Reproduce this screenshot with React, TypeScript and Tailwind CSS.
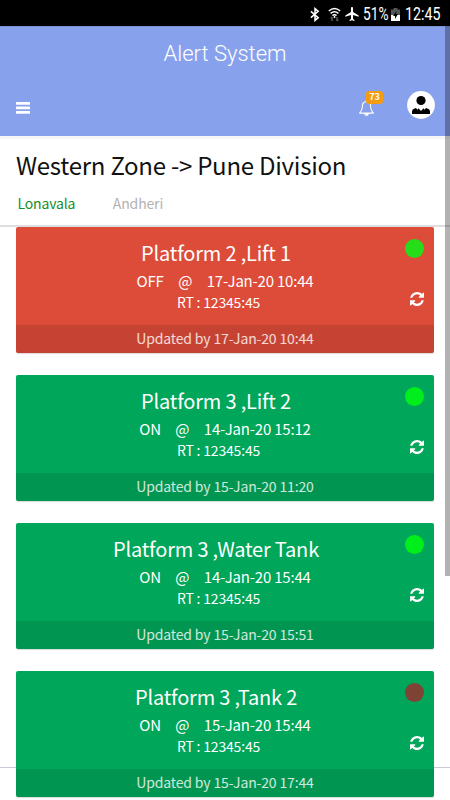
type Alert = {
  name: string;
  state: "ON" | "OFF";
  since: string;
  runtime: string;
  updated: string;
  dot: string;
};

const ALERTS: Alert[] = [
  { name: "Platform 2 ,Lift 1", state: "OFF", since: "17-Jan-20 10:44", runtime: "12345:45", updated: "17-Jan-20 10:44", dot: "bg-[#27dc18]" },
  { name: "Platform 3 ,Lift 2", state: "ON", since: "14-Jan-20 15:12", runtime: "12345:45", updated: "15-Jan-20 11:20", dot: "bg-[#00ee1c]" },
  { name: "Platform 3 ,Water Tank", state: "ON", since: "14-Jan-20 15:44", runtime: "12345:45", updated: "15-Jan-20 15:51", dot: "bg-[#00ee1c]" },
  { name: "Platform 3 ,Tank 2", state: "ON", since: "15-Jan-20 15:44", runtime: "12345:45", updated: "15-Jan-20 17:44", dot: "bg-[#7e4335]" },
];

function RefreshIcon() {
  return (
    <svg width="14" height="14" viewBox="0 0 1536 1536" fill="currentColor">
      <path d="M1511 928q0 5-1 7-64 268-268 434.5T764 1536q-146 0-282.5-55T238 1324l-129 129q-19 19-45 19t-45-19-19-45V960q0-26 19-45t45-19h448q26 0 45 19t19 45-19 45l-137 137q71 66 161 102t187 36q134 0 250-65t186-179q11-17 53-117 8-23 30-23h192q13 0 22.500 9.500t9.500 22.500zm25-800v448q0 26-19 45t-45 19h-448q-26 0-45-19t-19-45 19-45l138-138Q969 256 768 256q-134 0-250 65T332 500q-11 17-53 117-8 23-30 23H50q-13 0-22.500-9.500T18 608v-7q65-268 270-434.500T768 0q146 0 284 55.500T1297 212l130-129q19-19 45-19t45 19 19 45z" />
    </svg>
  );
}

function MenuIcon() {
  return (
    <svg width="14" height="12" viewBox="0 0 14 12" fill="currentColor">
      <rect y="0" width="14" height="2.700" rx="0.500" />
      <rect y="4.500" width="14" height="2.700" rx="0.500" />
      <rect y="9" width="14" height="2.700" rx="0.500" />
    </svg>
  );
}

function BellIcon() {
  return (
    <svg width="15" height="16" viewBox="0 0 1664 1792" fill="currentColor">
      <path transform="translate(-64 0)" d="M912 1696q0-16-16-16-59 0-101.500-42.500T752 1536q0-16-16-16t-16 16q0 73 51.500 124.500T896 1712q16 0 16-16zM246 1408h1300q-266-300-266-832 0-51-24-105t-69-103-121.500-80.500T896 256t-169.500 31.500T605 368t-69 103-24 105q0 532-266 832zm1482 0q0 52-38 90t-90 38h-448q0 106-75 181t-181 75-181-75-75-181H192q-52 0-90-38t-38-90q50-42 91-88t85-119.500 74.500-158.500 50-206T384 576q0-152 117-282.500T808 135q-8-19-8-39 0-40 28-68t68-28 68 28 28 68q0 20-8 39 190 28 307 158.500T1408 576q0 139 19.500 260t50 206 74.500 158.500 85 119.500 91 88z" />
    </svg>
  );
}

function Avatar() {
  return (
    <svg width="28" height="28" viewBox="0 0 28 28">
      <circle cx="14" cy="14" r="13.900" fill="#fff" />
      <circle cx="14" cy="9.500" r="4.600" fill="#000" />
      <path d="M5 23v-2.500q0-2 2-2.800l2-.7 1.500 1.800 1-1.500L14 20l2.500-2.700 1 1.500L19 17l2 .7q2 .8 2 2.800V23z" fill="#000" />
    </svg>
  );
}

function StatusBar() {
  return (
    <div className="flex h-[26px] items-center justify-end bg-black pt-[2px] pr-[9px] font-[Roboto,sans-serif] text-[18px] leading-[24px] text-white">
      <svg className="mr-[8px]" width="10" height="15" viewBox="0 0 11 15" fill="none" stroke="#fff" strokeWidth="1.700">
        <path d="M1 4l8 7-3.500 3V1L9 4l-8 7" />
      </svg>
      <svg className="mr-[4px]" width="13" height="15" viewBox="0 0 13 15" fill="none" stroke="#fff" strokeWidth="1.500">
        <path d="M.8 4q5.700-5 11.400 0M2.600 6.300q3.900-3.200 7.800 0M4.400 8.500q2.100-1.600 4.200 0" />
        <path d="M6.500 9v2" />
        <path d="M4 14v-4m-1.300 1.500L4 10M9 10v4m1.300-1.500L9 14" stroke="#555" />
      </svg>
      <svg className="mr-[4px]" width="14" height="14" viewBox="2.500 2 18 20" fill="#fff">
        <path d="M21 16v-2l-8-5V3.500a1.500 1.500 0 0 0-3 0V9l-8 5v2l8-2.500V19l-2 1.500V22l3.500-1 3.500 1v-1.500L13 19v-5.500z" />
      </svg>
      <span className="inline-block w-[28px] origin-left scale-x-[0.760] whitespace-nowrap">51%</span>
      <svg className="mr-[5px]" width="9" height="13" viewBox="0 0 9 13">
        <path d="M2.500 0h4v1.500H9V13H0V1.500h2.500z" fill="#555" />
        <path d="M0 7h9v6H0z" fill="#fff" />
        <path d="M5.500 3L2 8h2v3l3-5H5z" fill="#000" />
      </svg>
      <span className="inline-block w-[36px] origin-left scale-x-[0.790] whitespace-nowrap">12:45</span>
    </div>
  );
}

function AlertCard({ alert }: { alert: Alert }) {
  return (
    <div
      className={`relative flex h-[126px] flex-col overflow-hidden rounded-[2px] text-center text-white shadow-[0_1px_1px_rgba(0,0,0,0.15)] ${
        alert.state === "OFF" ? "bg-[#dd4b39]" : "bg-[#00a65a]"
      }`}
    >
      <div className="flex-1 pt-[11px]">
        <h3 className="pr-[18px] text-[20px] leading-[29px] tracking-[-0.18px]">{alert.name}</h3>
        <p className="flex justify-center gap-[14.500px] text-[15px] leading-[27px] tracking-[-0.200px]">
          <span>{alert.state}</span>
          <span>@</span>
          <span>{alert.since}</span>
        </p>
        <p className="pr-[13px] text-[14px] leading-[17px] tracking-[-0.180px]">RT : {alert.runtime}</p>
      </div>
      <div className="h-[28px] bg-black/10 text-[14px] leading-[27px] tracking-[-0.150px] text-white/80">Updated by {alert.updated}</div>
      <span className={`absolute top-[12px] right-[10px] size-[19px] rounded-full ${alert.dot}`} />
      <span className="absolute top-[65px] right-[10px]">
        <RefreshIcon />
      </span>
    </div>
  );
}

export default function App() {
  return (
    <div className="relative h-[800px] w-[450px] overflow-hidden bg-white font-['Noto_Sans_CJK_SC',sans-serif]">
      <StatusBar />

      {/* Header */}
      <header className="h-[110px] border-t border-[#7c93d8] bg-[#87a1ec] text-white">
        <h1 className="h-[53px] text-center font-[Roboto,sans-serif] text-[22px] leading-[53px] font-light">Alert System</h1>
        <div className="flex h-[50px] items-center pr-[15px] pl-4">
          <div className="pt-[6px]">
            <MenuIcon />
          </div>
          <div className="relative mr-[33px] ml-auto pt-[5px]">
            <BellIcon />
            <span className="absolute -top-[4px] left-[7px] h-[13px] w-[17px] rounded-[3px] bg-[#f39c12] text-center text-[9px] leading-[12px] font-bold">73</span>
          </div>
          <Avatar />
        </div>
      </header>

      {/* Location and station tabs */}
      <section className="h-[91px] border-t-[3px] border-b-2 border-t-[#f6f6f8] border-b-[#dedede] px-4">
        <h2 className="pt-[6px] text-[24px] leading-[40px] tracking-[-0.250px] text-[#111]">Western Zone -&gt; Pune Division</h2>
        <nav className="flex gap-[37.500px] pt-[6px] pl-[1.500px] text-[14px] leading-[24px] tracking-[-0.150px]">
          <span className="text-[#168f24]">Lonavala</span>
          <span className="text-[#b3b3b3]">Andheri</span>
        </nav>
      </section>

      <div className="absolute top-[767px] left-0 h-px w-full bg-[#c8cbd4]" />

      <main className="flex flex-col gap-[22px] px-4">
        {ALERTS.map((alert) => (
          <AlertCard key={alert.name} alert={alert} />
        ))}
      </main>

      {/* Scroll thumb */}
      <div className="absolute top-[26px] right-0 h-[550px] w-[5px] bg-black/30" />
    </div>
  );
}
